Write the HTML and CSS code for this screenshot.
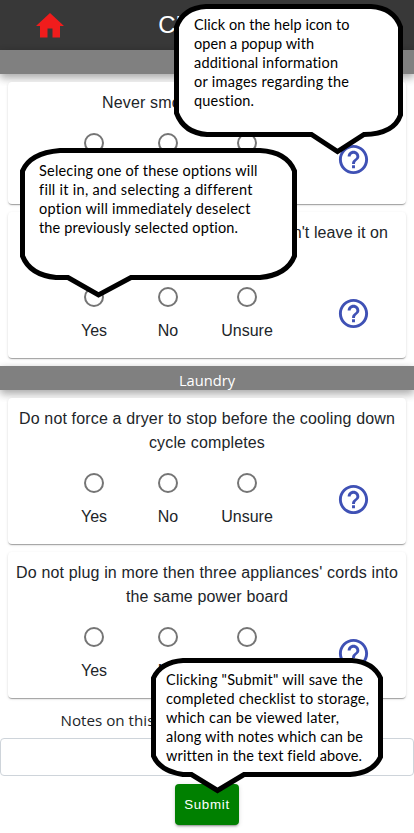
FILE: index.html
```html
<!DOCTYPE html>
<html lang="en">
<head>
<meta charset="utf-8">
<title>Checklist</title>
<link rel="stylesheet" href="styles.css">
</head>
<body>
<svg class="defs" width="0" height="0" aria-hidden="true">
  <symbol id="help" viewBox="0 0 24 24"><path d="M11 18h2v-2h-2v2zm1-16C6.48 2 2 6.48 2 12s4.48 10 10 10 10-4.48 10-10S17.52 2 12 2zm0 18c-4.41 0-8-3.59-8-8s3.59-8 8-8 8 3.59 8 8-3.59 8-8 8zm0-14c-2.21 0-4 1.79-4 4h2c0-1.1.9-2 2-2s2 .9 2 2c0 2-3 1.75-3 5h2c0-2.25 3-2.5 3-5 0-2.21-1.79-4-4-4z"/></symbol>
</svg>
<header class="topbar">
  <svg class="home" viewBox="0 0 28 25"><path d="M14 0 0 13h4v11.5h7.500v-9h5v9H24V13h4z"/></svg>
  <h1>Checklist</h1>
</header>
<main>
  <div class="section"></div>
  <section class="card">
    <p class="start">Never smoke</p>
    <div class="options">
      <label><i class="radio"></i></label><label><i class="radio"></i></label><label class="wide"><i class="radio"></i></label>
      <svg class="help"><use href="#help"/></svg>
    </div>
  </section>
  <section class="card">
    <p class="tall">don't leave it on</p>
    <div class="options">
      <label><i class="radio"></i>Yes</label><label><i class="radio"></i>No</label><label class="wide"><i class="radio"></i>Unsure</label>
      <svg class="help"><use href="#help"/></svg>
    </div>
  </section>
  <div class="section">Laundry</div>
  <section class="card">
    <p>Do not force a dryer to stop before the cooling down<br>cycle completes</p>
    <div class="options">
      <label><i class="radio"></i>Yes</label><label><i class="radio"></i>No</label><label class="wide"><i class="radio"></i>Unsure</label>
      <svg class="help"><use href="#help"/></svg>
    </div>
  </section>
  <section class="card">
    <p>Do not plug in more then three appliances' cords into<br>the same power board</p>
    <div class="options">
      <label><i class="radio"></i>Yes</label><label><i class="radio"></i>No</label><label class="wide"><i class="radio"></i></label>
      <svg class="help"><use href="#help"/></svg>
    </div>
  </section>
  <div class="notes">Notes on this</div>
  <div class="field"></div>
  <button class="submit">Submit</button>
</main>
<svg class="callouts" viewBox="0 0 414 833">
  <g class="bubble">
    <path d="M206 6.500H371Q394 8 400.500 27V115Q394 134 364 134.500L337.500 151.500L311.500 134.500H207Q184 133 176.500 113V27Q183 8 206 6.500Z"/>
    <path d="M60 150.500H260Q287 152 294.500 171V256Q287 275 260 277.500H131L98.500 295L68 277.500H56Q30 275 22.500 256V171Q30 153 60 150.500Z"/>
    <path d="M183 660.500H352Q373 662 380.500 678V757Q373 773 350 774.500H244L217.500 790.500L191.500 774.500H183Q160 771 153.500 756V678Q161 662 183 660.500Z"/>
  </g>
  <g class="tip">
    <text x="194" y="30" textLength="155.500">Click on the help icon to</text>
    <text x="194" y="49" textLength="120">open a popup with</text>
    <text x="194" y="68" textLength="144">additional information</text>
    <text x="194" y="87" textLength="155">or images regarding the</text>
    <text x="194" y="106" textLength="60">question.</text>
    <text x="39" y="176" textLength="218.500">Selecing one of these options will</text>
    <text x="39" y="195" textLength="213.500">fill it in, and selecting a different</text>
    <text x="39" y="214" textLength="211.500">option will immediately deselect</text>
    <text x="39" y="233" textLength="199">the previously selected option.</text>
    <text x="166" y="685" textLength="197">Clicking "Submit" will save the</text>
    <text x="166" y="704" textLength="203">completed checklist to storage,</text>
    <text x="166" y="723" textLength="173">which can be viewed later,</text>
    <text x="166" y="742" textLength="197">along with notes which can be</text>
    <text x="166" y="761" textLength="196">written in the text field above.</text>
  </g>
</svg>
</body>
</html>
```
FILE: styles.css
```css
* { box-sizing: border-box; }
body { margin: 0; height: 833px; overflow: hidden; background: #fff; color: #212529; font: 16px/24px "Liberation Sans", Arial, sans-serif; }
.defs { position: absolute; }
.topbar { height: 50px; background: #383838; display: grid; grid-template-columns: 1fr auto 1fr; align-items: center; }
.home { width: 28px; height: 25px; margin-left: 36px; fill: #f01c1c; }
h1 { margin: 0; color: #fff; font-size: 24px; font-weight: 400; line-height: 50px; }
main { display: flex; flex-direction: column; gap: 8px; }
.section { height: 24px; background: #808080; color: #fff; text-align: center; font: 14.700px/28px "Open Sans", "Noto Sans", sans-serif; box-shadow: 0 4px 8px rgba(0,0,0,.2), 0 3px 10px rgba(0,0,0,.19); }
.card { margin: 0 8px; padding: 9px 0 16px; background: #fff; border-radius: 4px; box-shadow: 0 2px 1px -1px rgba(0,0,0,.2), 0 1px 1px rgba(0,0,0,.14), 0 1px 3px rgba(0,0,0,.12); }
.card p { margin: 0 0 7px; text-align: center; white-space: nowrap; letter-spacing: .15px; }
.card p.start { text-align: left; padding-left: 94px; }
.card p.tall { height: 48px; text-align: right; padding-right: 18px; letter-spacing: .1px; }
.options { display: flex; gap: 32px; align-items: center; height: 66px; padding-left: 65px; }
.options label { display: flex; flex-direction: column; align-items: center; width: 42px; height: 66px; line-height: 26px; }
.options .wide { width: 52px; }
.radio { flex: none; width: 20px; height: 20px; margin: 11px; border: 2px solid #757575; border-radius: 50%; }
.help { width: 35px; height: 35px; margin: 9px 0 0 31px; fill: #3f51b5; }
.notes { height: 24px; padding-left: 60.500px; font: 15.200px/28px "Open Sans", "Noto Sans", sans-serif; }
.field { height: 38px; border: 1px solid #ced4da; border-radius: 4px; }
.submit { align-self: center; width: 64px; height: 41px; padding: 0 0 1px; border: 0; border-radius: 4px; background: #008000; color: #fff; font: 13.333px "Liberation Sans", Arial, sans-serif; letter-spacing: .7px; box-shadow: 0 3px 1px -2px rgba(0,0,0,.2), 0 2px 2px rgba(0,0,0,.14), 0 1px 5px rgba(0,0,0,.12); }
.callouts { position: absolute; left: 0; top: 0; width: 414px; height: 833px; }
.bubble { fill: #fff; stroke: #000; stroke-width: 5; }
.tip { fill: #000; font: 14.500px Lato, sans-serif; font-variant-ligatures: none; }
```
